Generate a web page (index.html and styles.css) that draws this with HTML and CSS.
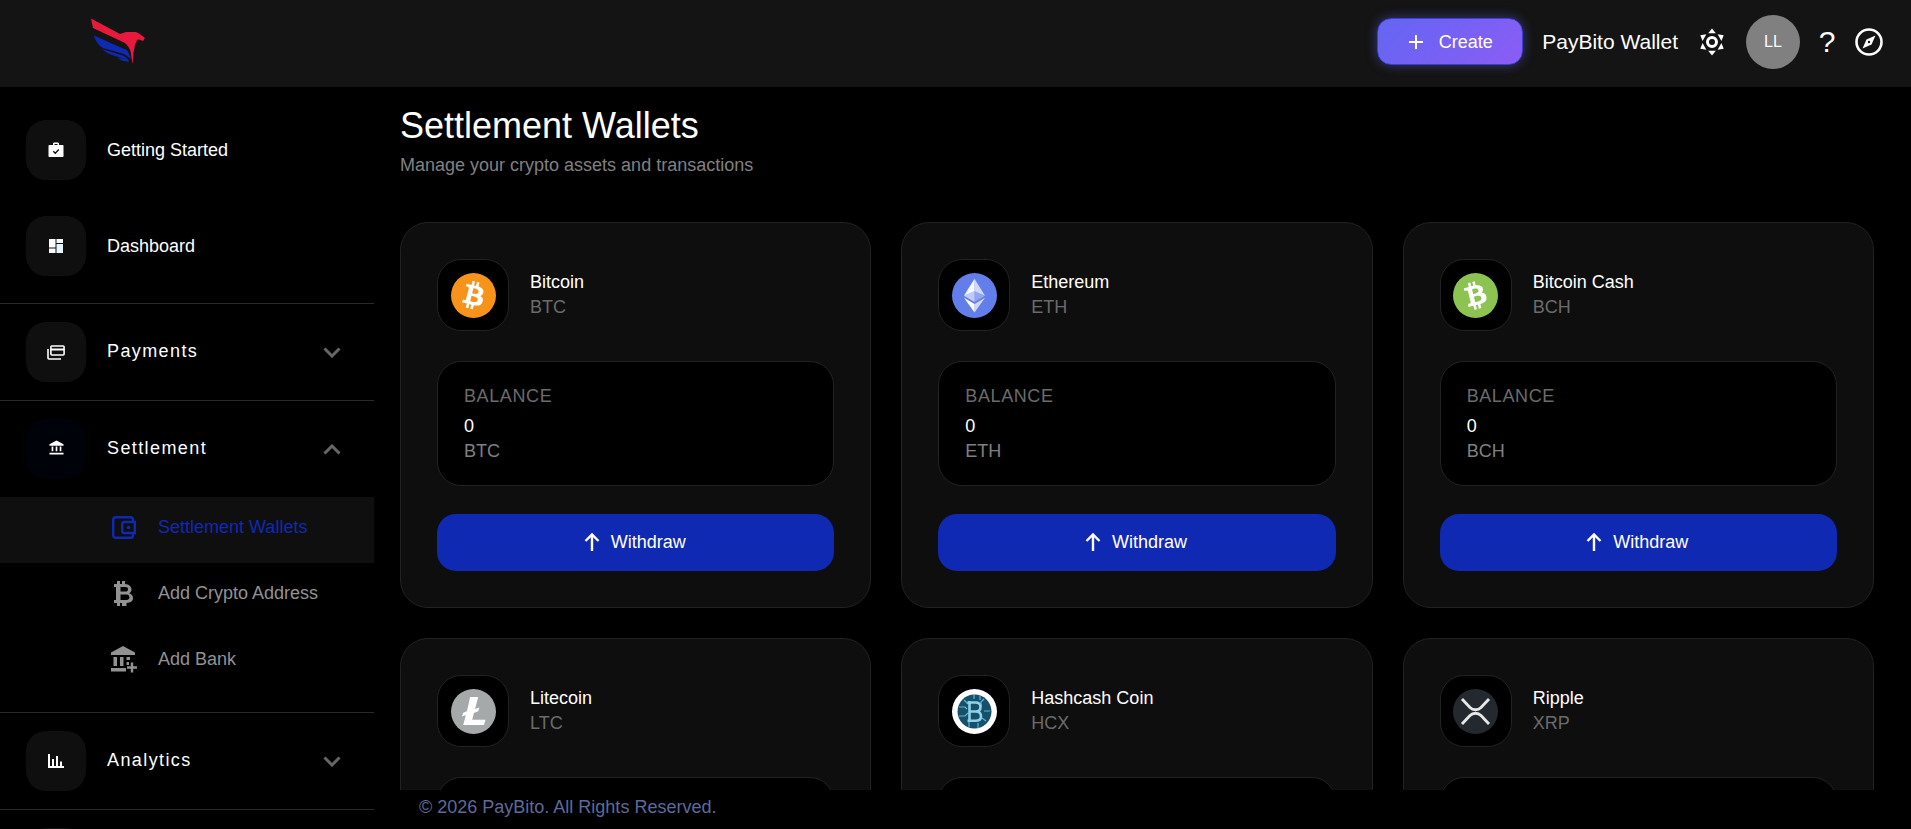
FILE: index.html
```html
<!DOCTYPE html>
<html lang="en">
<head>
<meta charset="utf-8">
<title>Settlement Wallets</title>
<link rel="stylesheet" href="styles.css">
</head>
<body>
<svg class="defs" width="0" height="0" aria-hidden="true">
  <defs>
    <path id="btc-b" fill-rule="evenodd" d="M17.288 10.291c.24-1.59-.974-2.45-2.64-3.03l.54-2.153-1.315-.33-.525 2.107c-.345-.087-.705-.167-1.064-.25l.526-2.127-1.32-.33-.54 2.165c-.285-.067-.565-.132-.84-.2l-1.815-.45-.35 1.407s.975.225.955.236c.535.136.63.486.615.766l-1.477 5.92c-.075.166-.24.406-.614.314.015.02-.96-.24-.96-.24l-.66 1.51 1.71.426.93.242-.54 2.19 1.32.327.54-2.17c.36.1.705.19 1.05.273l-.51 2.154 1.32.33.545-2.19c2.24.427 3.93.257 4.64-1.774.57-1.637-.03-2.58-1.217-3.196.854-.193 1.5-.76 1.68-1.93h.01zm-3.01 4.22c-.404 1.64-3.157.75-4.05.53l.72-2.9c.896.23 3.757.67 3.33 2.37zm.41-4.24c-.37 1.49-2.662.735-3.405.55l.654-2.64c.744.18 3.137.524 2.75 2.084v.006z"/>
    <path id="chev-down" d="M1.500 1.500L9 9l7.500-7.500" fill="none" stroke="currentColor" stroke-width="3"/>
    <path id="chev-up" d="M1.500 9.500L9 2l7.500 7.500" fill="none" stroke="currentColor" stroke-width="3"/>
    <g id="arrow-up"><path d="M8 19V3M1.500 9L8 2.500 14.500 9" fill="none" stroke="currentColor" stroke-width="2.400"/></g>
  </defs>
</svg>

<div class="app">
  <header class="topbar">
    <svg class="logo" width="54" height="48" viewBox="0 0 54 48" aria-label="PayBito">
      <path fill="#e8193c" d="M0 .5L29 16l6-2h10l3 1.500 6 4.500-2 3-4-1.500-2 .5-2 5-1.500 8-1 11.500-1.500-10C40 32 37 27 33 24.500L2 10z"/>
      <path fill="#1029b3" d="M3 17.500L24 27l12 5 4.500 9-7.500-5-21-6C7 27 4 22 3 17.500z"/>
      <path fill="#1029b3" d="M11 31l22 7 5 4-14-4C18 36 14 34 11 31z"/>
      <path fill="#1029b3" d="M26 39.500l11 2 1 2.500-7-1.500z"/>
    </svg>
    <button class="create-btn">
      <svg width="16" height="16" viewBox="0 0 16 16"><path d="M8 1v14M1 8h14" stroke="currentColor" stroke-width="2"/></svg>
      <span>Create</span>
    </button>
    <span class="wallet-name">PayBito Wallet</span>
    <svg class="theme-icon" width="28" height="30" viewBox="0 0 28 30">
      <circle cx="14" cy="15" r="4.500" fill="none" stroke="#fff" stroke-width="3"/>
      <g fill="#fff">
        <path d="M14 1.500l-3.800 4.800h7.600z"/>
        <path d="M14 1.500l-3.800 4.800h7.600z" transform="rotate(60 14 15)"/>
        <path d="M14 1.500l-3.800 4.800h7.600z" transform="rotate(120 14 15)"/>
        <path d="M14 1.500l-3.800 4.800h7.600z" transform="rotate(180 14 15)"/>
        <path d="M14 1.500l-3.800 4.800h7.600z" transform="rotate(240 14 15)"/>
        <path d="M14 1.500l-3.800 4.800h7.600z" transform="rotate(300 14 15)"/>
      </g>
    </svg>
    <div class="avatar">LL</div>
    <span class="help">?</span>
    <svg class="compass" width="28" height="28" viewBox="0 0 28 28">
      <circle cx="14" cy="14" r="12.500" fill="none" stroke="#fff" stroke-width="2.600"/>
      <path fill="#fff" d="M20.500 7.500L16.500 16.500 7.500 20.500 11.500 11.500z"/>
      <circle cx="14" cy="14" r="1.200" fill="#141414"/>
    </svg>
  </header>

  <div class="shell">
    <nav class="sidebar">
      <section class="nav-section nav-top">
        <div class="nav-row">
          <span class="nav-box">
            <svg width="16" height="16" viewBox="0 0 16 16"><path fill="#fff" fill-rule="evenodd" d="M5 3V1.800C5 1 5.800.500 6.500.500h3c.7 0 1.500.5 1.500 1.300V3h3.500c.6 0 1 .4 1 1v10c0 .6-.4 1-1 1h-13c-.6 0-1-.4-1-1V4c0-.6.4-1 1-1zm1.500 0h3V2h-3z"/><path d="M5.300 9.300l2 2 3.500-3.800" fill="none" stroke="#0f0f0f" stroke-width="1.300"/></svg>
          </span>
          <span class="nav-label">Getting Started</span>
        </div>
        <div class="nav-row">
          <span class="nav-box">
            <svg width="14" height="14" viewBox="0 0 14 14"><path fill="#fff" d="M0 0h6.500v8.500H0zM7.500 0H14v4H7.500zM0 9.500h6.500V14H0z"/><path fill="#e6f4ff" d="M7.500 5H14v9H7.500z"/></svg>
          </span>
          <span class="nav-label">Dashboard</span>
        </div>
      </section>

      <section class="nav-section">
        <div class="nav-row">
          <span class="nav-box">
            <svg width="18" height="15" viewBox="0 0 18 15"><path fill="none" stroke="#fff" stroke-width="1.600" d="M4.800 1h11.400c.5 0 .9.400.9.900v7.200c0 .5-.4.900-.9.900H4.800c-.5 0-.9-.4-.9-.9V1.900c0-.5.4-.9.900-.9z"/><path stroke="#fff" stroke-width="2" d="M4 4.500h13"/><path fill="none" stroke="#fff" stroke-width="1.600" d="M1 4v9c0 .6.400 1 1 1h12"/></svg>
          </span>
          <span class="nav-group">Payments</span>
          <svg class="chev" width="18" height="11" viewBox="0 0 18 11"><use href="#chev-down"/></svg>
        </div>
      </section>

      <section class="nav-section nav-open">
        <div class="nav-row">
          <span class="nav-box nav-box-active">
            <svg class="bank-icon" width="15" height="15" viewBox="0 0 16 16"><path fill="#fff" d="M8 .500L15.500 4.500V6H.500V4.500zM2.800 7h1.800v5H2.800zM7.100 7h1.800v5H7.100zM11.400 7h1.800v5h-1.800zM.500 13.500h15V15.500H.500z"/></svg>
          </span>
          <span class="nav-group">Settlement</span>
          <svg class="chev" width="18" height="11" viewBox="0 0 18 11"><use href="#chev-up"/></svg>
        </div>
        <div class="sub-list">
          <div class="sub-row sub-active">
            <span class="sub-icon">
              <svg width="24" height="23" viewBox="0 0 24 23"><path fill="none" stroke="currentColor" stroke-width="2.400" d="M21 6V3.500c0-1-.8-2.300-2.300-2.300H4C2.400 1.200 1.200 2.400 1.200 4v15c0 1.600 1.200 2.800 2.800 2.800h14.700c1.500 0 2.300-1.300 2.300-2.300V17"/><path fill="none" stroke="currentColor" stroke-width="2.400" d="M12 6h10.800v11H12c-1 0-1.800-.8-1.800-1.800V7.800C10.200 6.800 11 6 12 6z"/><circle cx="16.500" cy="11.500" r="1.800" fill="currentColor"/></svg>
            </span>
            <span>Settlement Wallets</span>
          </div>
          <div class="sub-row">
            <span class="sub-icon">
              <svg width="20" height="25" viewBox="0 0 20 25"><path fill="currentColor" fill-rule="evenodd" d="M0 3h3V0h3v3h2V0h3v3.100c4 .4 6.500 2.500 6.500 5.400 0 1.800-.9 3.100-2.400 3.800 2.200.7 3.900 2.300 3.900 4.700 0 3.300-2.800 4.800-6.500 5V25H8v-3H6v3H3v-3H0v-3h2V6H0zm6.500 3v4.500h5c1.600 0 2.500-.9 2.500-2.300S13.100 6 11.500 6zm0 7.500V19h6c1.800 0 2.900-1 2.900-2.800s-1.100-2.700-2.900-2.700z"/></svg>
            </span>
            <span>Add Crypto Address</span>
          </div>
          <div class="sub-row">
            <span class="sub-icon">
              <svg width="26" height="27" viewBox="0 0 26 27"><path fill="currentColor" d="M12 0l12 6.500V9H0V6.500zM2.500 11h3.500v9H2.500zM9 11h3.500v9H9zM15.500 11H19v3h-3.500zM15.500 16H18v3h-2.500zM0 22h15v3.500H0z"/><path stroke="currentColor" stroke-width="2.400" d="M21 16.500v10M16 21.500h10"/></svg>
            </span>
            <span>Add Bank</span>
          </div>
        </div>
      </section>

      <section class="nav-section">
        <div class="nav-row">
          <span class="nav-box">
            <svg width="16" height="14" viewBox="0 0 16 14"><path fill="#fff" d="M0 0h2v14H0zM2 12h14v2H2zM4 5h2v8H4zM8 2h2v11H8zM12 7.500h2V13h-2z"/></svg>
          </span>
          <span class="nav-group">Analytics</span>
          <svg class="chev" width="18" height="11" viewBox="0 0 18 11"><use href="#chev-down"/></svg>
        </div>
      </section>

      <section class="nav-section">
        <div class="nav-row"><span class="nav-box"></span></div>
      </section>
    </nav>

    <div class="main">
      <main class="content">
        <h1 class="title">Settlement Wallets</h1>
        <p class="subtitle">Manage your crypto assets and transactions</p>

        <div class="wallet-grid">
          <article class="card">
            <div class="coin-row">
              <span class="coin-box">
                <svg width="45" height="45" viewBox="0 0 24 24"><circle cx="12" cy="12" r="12" fill="#f7931a"/><use href="#btc-b" fill="#fff"/></svg>
              </span>
              <div><div class="coin-name">Bitcoin</div><div class="coin-sym">BTC</div></div>
            </div>
            <div class="balance"><div class="bal-label">BALANCE</div><div class="bal-val">0</div><div class="bal-unit">BTC</div></div>
            <button class="withdraw"><svg width="16" height="22" viewBox="0 0 16 22"><use href="#arrow-up"/></svg><span>Withdraw</span></button>
          </article>

          <article class="card">
            <div class="coin-row">
              <span class="coin-box">
                <svg width="45" height="45" viewBox="0 0 32 32"><circle cx="16" cy="16" r="16" fill="#627eea"/><path fill="#fff" fill-opacity=".7" d="M16 4v8.900l7.500 3.300z"/><path fill="#fff" fill-opacity=".95" d="M16 4L8.500 16.200l7.500-3.300z"/><path fill="#fff" fill-opacity=".7" d="M16 22v6l7.500-10.400z"/><path fill="#fff" d="M16 22l-7.500-4.400L16 28z"/><path fill="#fff" fill-opacity=".3" d="M16 20.600l7.500-4.400-7.500-3.300z"/><path fill="#fff" fill-opacity=".6" d="M8.500 16.200l7.500 4.400v-7.700z"/></svg>
              </span>
              <div><div class="coin-name">Ethereum</div><div class="coin-sym">ETH</div></div>
            </div>
            <div class="balance"><div class="bal-label">BALANCE</div><div class="bal-val">0</div><div class="bal-unit">ETH</div></div>
            <button class="withdraw"><svg width="16" height="22" viewBox="0 0 16 22"><use href="#arrow-up"/></svg><span>Withdraw</span></button>
          </article>

          <article class="card">
            <div class="coin-row">
              <span class="coin-box">
                <svg width="45" height="45" viewBox="0 0 24 24"><circle cx="12" cy="12" r="12" fill="#8dc351"/><use href="#btc-b" fill="#fff" transform="rotate(-28 12 12)"/></svg>
              </span>
              <div><div class="coin-name">Bitcoin Cash</div><div class="coin-sym">BCH</div></div>
            </div>
            <div class="balance"><div class="bal-label">BALANCE</div><div class="bal-val">0</div><div class="bal-unit">BCH</div></div>
            <button class="withdraw"><svg width="16" height="22" viewBox="0 0 16 22"><use href="#arrow-up"/></svg><span>Withdraw</span></button>
          </article>

          <article class="card">
            <div class="coin-row">
              <span class="coin-box">
                <svg width="45" height="45" viewBox="0 0 24 24"><circle cx="12" cy="12" r="12" fill="#a6a9aa"/><path fill="#fff" d="M10.200 4.300h4.300l-1.700 6.400 2.300-.9-.6 2.100-2.300.9-.9 3.600h7.100l-.8 2.800H6.500l1.400-5.300-2 .8.500-2 2.100-.8z"/></svg>
              </span>
              <div><div class="coin-name">Litecoin</div><div class="coin-sym">LTC</div></div>
            </div>
            <div class="balance"><div class="bal-label">BALANCE</div><div class="bal-val">0</div><div class="bal-unit">LTC</div></div>
            <button class="withdraw"><svg width="16" height="22" viewBox="0 0 16 22"><use href="#arrow-up"/></svg><span>Withdraw</span></button>
          </article>

          <article class="card">
            <div class="coin-row">
              <span class="coin-box">
                <svg width="45" height="45" viewBox="0 0 45 45">
                  <circle cx="22.500" cy="22.500" r="22.500" fill="#fff"/>
                  <circle cx="22.500" cy="22.500" r="17" fill="#17506b"/>
                  <g fill="none" stroke="#5fb4d2" stroke-width="1.200">
                    <path d="M7 18h6l2 2M7 27h6l3-3M32 10l-3 3v5M38 22h-6M34 32l-4-3M12 11l4 4M22 6v4M28 7v4M17 38v-5M26 39v-5"/>
                  </g>
                  <path fill="none" stroke="#8cd3ea" stroke-width="2.600" d="M17.500 12v21M15.500 13.500h8c3 0 5 1.800 5 4.500s-2 4.500-5 4.500h-6m6 0c3.500 0 5.500 2 5.500 4.700s-2 4.600-5.500 4.600h-8"/>
                </svg>
              </span>
              <div><div class="coin-name">Hashcash Coin</div><div class="coin-sym">HCX</div></div>
            </div>
            <div class="balance"><div class="bal-label">BALANCE</div><div class="bal-val">0</div><div class="bal-unit">HCX</div></div>
            <button class="withdraw"><svg width="16" height="22" viewBox="0 0 16 22"><use href="#arrow-up"/></svg><span>Withdraw</span></button>
          </article>

          <article class="card">
            <div class="coin-row">
              <span class="coin-box">
                <svg width="45" height="45" viewBox="0 0 45 45"><circle cx="22.500" cy="22.500" r="22.500" fill="#23292f"/><path fill="none" stroke="#e8e8e8" stroke-width="2.800" d="M9 10l8 8.500c3 3 8 3 11 0l8-8.500M9 35l8-8.500c3-3 8-3 11 0l8 8.500"/></svg>
              </span>
              <div><div class="coin-name">Ripple</div><div class="coin-sym">XRP</div></div>
            </div>
            <div class="balance"><div class="bal-label">BALANCE</div><div class="bal-val">0</div><div class="bal-unit">XRP</div></div>
            <button class="withdraw"><svg width="16" height="22" viewBox="0 0 16 22"><use href="#arrow-up"/></svg><span>Withdraw</span></button>
          </article>
        </div>
      </main>
      <footer class="footer">© 2026 PayBito. All Rights Reserved.</footer>
    </div>
  </div>
</div>
</body>
</html>
```

FILE: styles.css
```css
* { box-sizing: border-box; }

html, body {
  margin: 0;
  height: 100%;
  overflow: hidden;
  background: #000;
  color: #fff;
  font-family: "Liberation Sans", Arial, sans-serif;
  font-size: 18px;
}

.defs { position: absolute; }

.app {
  display: flex;
  flex-direction: column;
  height: 100vh;
}

/* Top bar */
.topbar {
  flex: 0 0 87px;
  display: flex;
  align-items: center;
  padding: 0 28px 4px 91px;
  background: #141414;
}

.logo { margin-right: auto; }

.create-btn {
  display: flex;
  align-items: center;
  justify-content: center;
  gap: 15px;
  width: 146px;
  height: 47px;
  padding-top: 2px;
  border: 1px solid #3a3fd8;
  border-radius: 14px;
  background: linear-gradient(135deg, #6366f1, #8b5cf6);
  box-shadow: 0 0 12px rgba(99, 102, 241, .45);
  color: #fff;
  font: inherit;
}

.wallet-name {
  margin-left: 19px;
  font-size: 21px;
}

.theme-icon { margin-left: 20px; }

.avatar {
  display: flex;
  align-items: center;
  justify-content: center;
  width: 54px;
  height: 54px;
  margin-left: 20px;
  border-radius: 50%;
  background: #808080;
  font-size: 16px;
}

.help {
  width: 28px;
  margin-left: 13px;
  font-size: 30px;
  line-height: 1;
  text-align: center;
}

.compass { margin-left: 14px; }

/* Shell */
.shell {
  flex: 1;
  display: flex;
  min-height: 0;
}

/* Sidebar */
.sidebar {
  flex: 0 0 374px;
  overflow: hidden;
  background: #000;
}

.nav-section {
  padding: 18px 0;
  border-bottom: 1px solid #2a2a2a;
}

.nav-top {
  display: flex;
  flex-direction: column;
  gap: 36px;
  padding: 33px 0 27px;
}

.nav-open { padding-bottom: 17px; }

.nav-row {
  display: flex;
  align-items: center;
  gap: 21px;
  padding: 0 33px 0 26px;
}

.nav-box {
  flex: 0 0 60px;
  display: flex;
  align-items: center;
  justify-content: center;
  height: 60px;
  border-radius: 20px;
  background: #0f0f0f;
}

.nav-box-active { background: #00020a; }

.bank-icon { margin-bottom: 3px; }

.nav-group {
  margin-top: -2px;
  letter-spacing: 1.4px;
}

.chev {
  margin-left: auto;
  color: #666;
}

.sub-list { margin-top: 18px; }

.sub-row {
  display: flex;
  align-items: center;
  gap: 21px;
  height: 66px;
  padding: 0 0 6px 111px;
  color: #929292;
}

.sub-active {
  background: #0f0f0f;
  color: #1029b3;
}

.sub-icon {
  flex: 0 0 26px;
  display: flex;
  justify-content: center;
}

/* Main */
.main {
  flex: 1;
  display: flex;
  flex-direction: column;
  min-width: 0;
}

.content {
  flex: 1;
  min-height: 0;
  overflow: hidden;
  padding: 17px 37px 0 26px;
}

.title {
  margin: 0;
  font-size: 36px;
  font-weight: 400;
  line-height: 44px;
}

.subtitle {
  margin: 6px 0 0;
  color: #808080;
  line-height: 22px;
}

.wallet-grid {
  display: grid;
  grid-template-columns: repeat(3, 1fr);
  gap: 30px;
  margin-top: 46px;
}

.card {
  padding: 36px;
  border: 1px solid #222;
  border-radius: 28px;
  background: #0e0e0e;
}

.coin-row {
  display: flex;
  align-items: center;
  gap: 21px;
}

.coin-box {
  flex: 0 0 72px;
  display: flex;
  align-items: center;
  justify-content: center;
  height: 72px;
  border: 1px solid #222;
  border-radius: 24px;
  background: #000;
}

.coin-name { line-height: 24px; }

.coin-sym {
  color: #6b6b6b;
  line-height: 26px;
}

.balance {
  height: 125px;
  margin-top: 30px;
  padding: 22px 26px;
  border: 1px solid #222;
  border-radius: 24px;
  background: #000;
}

.bal-label {
  color: #6b6b6b;
  letter-spacing: .6px;
  line-height: 24px;
}

.bal-val {
  margin-top: 6px;
  line-height: 24px;
}

.bal-unit {
  color: #808080;
  line-height: 26px;
}

.withdraw {
  display: flex;
  align-items: center;
  justify-content: center;
  gap: 11px;
  width: 100%;
  height: 57px;
  margin-top: 28px;
  padding: 0 2px 0 0;
  border: 0;
  border-radius: 19px;
  background: #1029b3;
  color: #fff;
  font: inherit;
}

/* Footer */
.footer {
  flex: 0 0 39px;
  padding: 6px 45px;
  background: #000;
  color: #5d6a9b;
  line-height: 22px;
}
```
